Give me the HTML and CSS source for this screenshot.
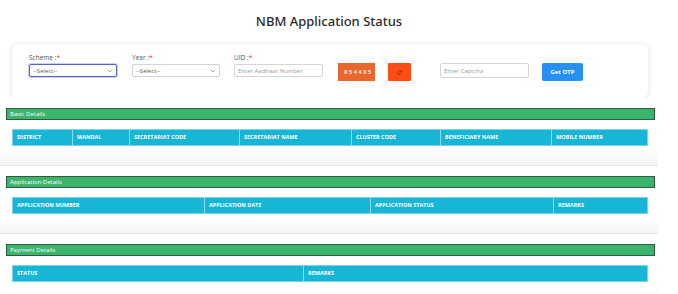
FILE: index.html
```html
<!DOCTYPE html>
<html lang="en">
<head>
  <meta charset="UTF-8">
  <meta name="viewport" content="width=device-width, initial-scale=1.0">
  <title>NBM Application Status</title>
  <link rel="stylesheet" href="styles.css">
</head>
<body>
  <div class="page">
    <h1 class="title">NBM Application Status</h1>

    <!-- Search form -->
    <div class="form-card">
      <div class="field field-scheme">
        <label>Scheme :<span class="req">*</span></label>
        <select class="focused"><option>--Select--</option></select>
      </div>
      <div class="field field-year">
        <label>Year :<span class="req">*</span></label>
        <select><option>--Select--</option></select>
      </div>
      <div class="field field-uid">
        <label>UID :<span class="req">*</span></label>
        <input type="text" placeholder="Enter Aadhaar Number">
      </div>
      <div class="captcha">954405</div>
      <button class="refresh" type="button">
        <svg width="5" height="5" viewBox="0 0 10 10"><path d="M8 3.2A3.6 3.6 0 1 0 8.4 6.4" fill="none" stroke="#a2300e" stroke-width="1.8"/><path d="M8.8 0.8V3.8H5.8" fill="none" stroke="#a2300e" stroke-width="1.6"/></svg>
      </button>
      <input class="captcha-input" type="text" placeholder="Enter Captcha">
      <button class="otp" type="button">Get OTP</button>
    </div>

    <!-- Basic Details -->
    <div class="section">
      <div class="section-bar">Basic Details</div>
      <div class="head-row basic">
        <div>DISTRICT</div>
        <div>MANDAL</div>
        <div>SECRETARIAT CODE</div>
        <div>SECRETARIAT NAME</div>
        <div>CLUSTER CODE</div>
        <div>BENEFICIARY NAME</div>
        <div>MOBILE NUMBER</div>
      </div>
    </div>

    <!-- Application Details -->
    <div class="section">
      <div class="section-bar">Application Details</div>
      <div class="head-row application">
        <div>APPLICATION NUMBER</div>
        <div>APPLICATION DATE</div>
        <div>APPLICATION STATUS</div>
        <div>REMARKS</div>
      </div>
    </div>

    <!-- Payment Details -->
    <div class="section">
      <div class="section-bar">Payment Details</div>
      <div class="head-row payment">
        <div>STATUS</div>
        <div>REMARKS</div>
      </div>
    </div>
  </div>
</body>
</html>
```

FILE: styles.css
```css
body {
  margin: 0;
  background-color: #ffffff;
  font-family: 'Open Sans', 'Noto Sans', sans-serif;
  color: #333;
}

.page {
  width: 658px;
}

.title {
  margin: 0;
  height: 44px;
  line-height: 42px;
  text-align: center;
  font-family: 'Noto Sans', sans-serif;
  font-size: 13px;
  font-weight: 500;
  color: #2c2c2c;
}

/* form */
.form-card {
  box-sizing: border-box;
  margin: 0 10px 0 12px;
  height: 54px;
  padding-left: 17px;
  background-color: #fff;
  border-radius: 6px;
  box-shadow: 0 1px 6px rgba(0, 0, 0, 0.13);
  display: flex;
  align-items: flex-start;
}

.field {
  display: flex;
  flex-direction: column;
  padding-top: 9px;
}

.field label {
  font-size: 6.5px;
  line-height: 10px;
  color: #555;
  margin-bottom: 1px;
}

.req {
  color: #e53935;
}

.field-scheme { width: 88px; }
.field-year { width: 88px; margin-left: 15px; }
.field-uid { width: 89px; margin-left: 14px; }

select, input {
  box-sizing: border-box;
  height: 13px;
  font-family: 'Open Sans', sans-serif;
  font-size: 6px;
  color: #555;
  border: 1px solid #d4d4d4;
  border-radius: 2px;
  background-color: #fff;
  padding: 0 3px;
  outline: none;
}

select {
  appearance: none;
  -webkit-appearance: none;
  background-image: url("data:image/svg+xml;utf8,<svg xmlns='http://www.w3.org/2000/svg' width='6' height='4' viewBox='0 0 6 4'><path d='M1 1l2 2 2-2' fill='none' stroke='%23999' stroke-width='0.8'/></svg>");
  background-repeat: no-repeat;
  background-position: right 3px center;
}

select.focused {
  border-color: #5664c4;
  box-shadow: 0 0 0 1px rgba(86, 100, 196, 0.3);
}

input::placeholder {
  color: #9a9a9a;
}

.captcha {
  margin: 19px 0 0 15px;
  width: 37px;
  height: 18px;
  background-color: #e8672e;
  color: rgba(255, 255, 255, 0.8);
  font-size: 6px;
  font-weight: bold;
  letter-spacing: 1.3px;
  line-height: 18px;
  padding-left: 6px;
  box-sizing: border-box;
  overflow: hidden;
  white-space: nowrap;
}

.refresh {
  margin: 19px 0 0 13px;
  width: 23px;
  height: 18px;
  padding: 0;
  border: none;
  border-radius: 1px;
  background-color: #ff4b14;
  display: flex;
  align-items: center;
  justify-content: center;
}

.captcha-input {
  margin: 19px 0 0 29px;
  width: 89px;
  height: 15px;
}

.otp {
  margin: 19px 0 0 13px;
  width: 41px;
  height: 18px;
  padding: 0;
  border: none;
  border-radius: 2px;
  background-color: #2590f2;
  color: #fff;
  font-family: 'Open Sans', sans-serif;
  font-size: 6px;
  font-weight: bold;
}

/* sections */
.section {
  padding: 10px 0 19px 0;
  background: linear-gradient(to bottom, #fff calc(100% - 14px), #f3f3f3);
  border-bottom: 1px solid #e8e8e8;
}

.section-bar {
  box-sizing: border-box;
  margin: 0 3px 0 6px;
  height: 12px;
  padding-left: 3px;
  background-color: #3cb46c;
  border: 1px solid #2e5b3d;
  color: #fff;
  font-size: 6px;
  line-height: 10px;
}

.head-row {
  box-sizing: border-box;
  margin: 9px 10px 0 12px;
  height: 17px;
  display: grid;
  background-color: #17b5d6;
  border: 1px solid #7fd3e6;
}

.head-row div {
  padding-left: 4px;
  border-left: 1px solid #8ed9ea;
  color: #fff;
  font-size: 5.5px;
  font-weight: bold;
  line-height: 15px;
  white-space: nowrap;
  overflow: hidden;
}

.head-row div:first-child {
  border-left: none;
}

.basic {
  grid-template-columns: 59px 57px 110px 112px 89px 111px 1fr;
}

.application {
  grid-template-columns: 191px 166px 183px 1fr;
}

.payment {
  grid-template-columns: 290px 1fr;
}
```
